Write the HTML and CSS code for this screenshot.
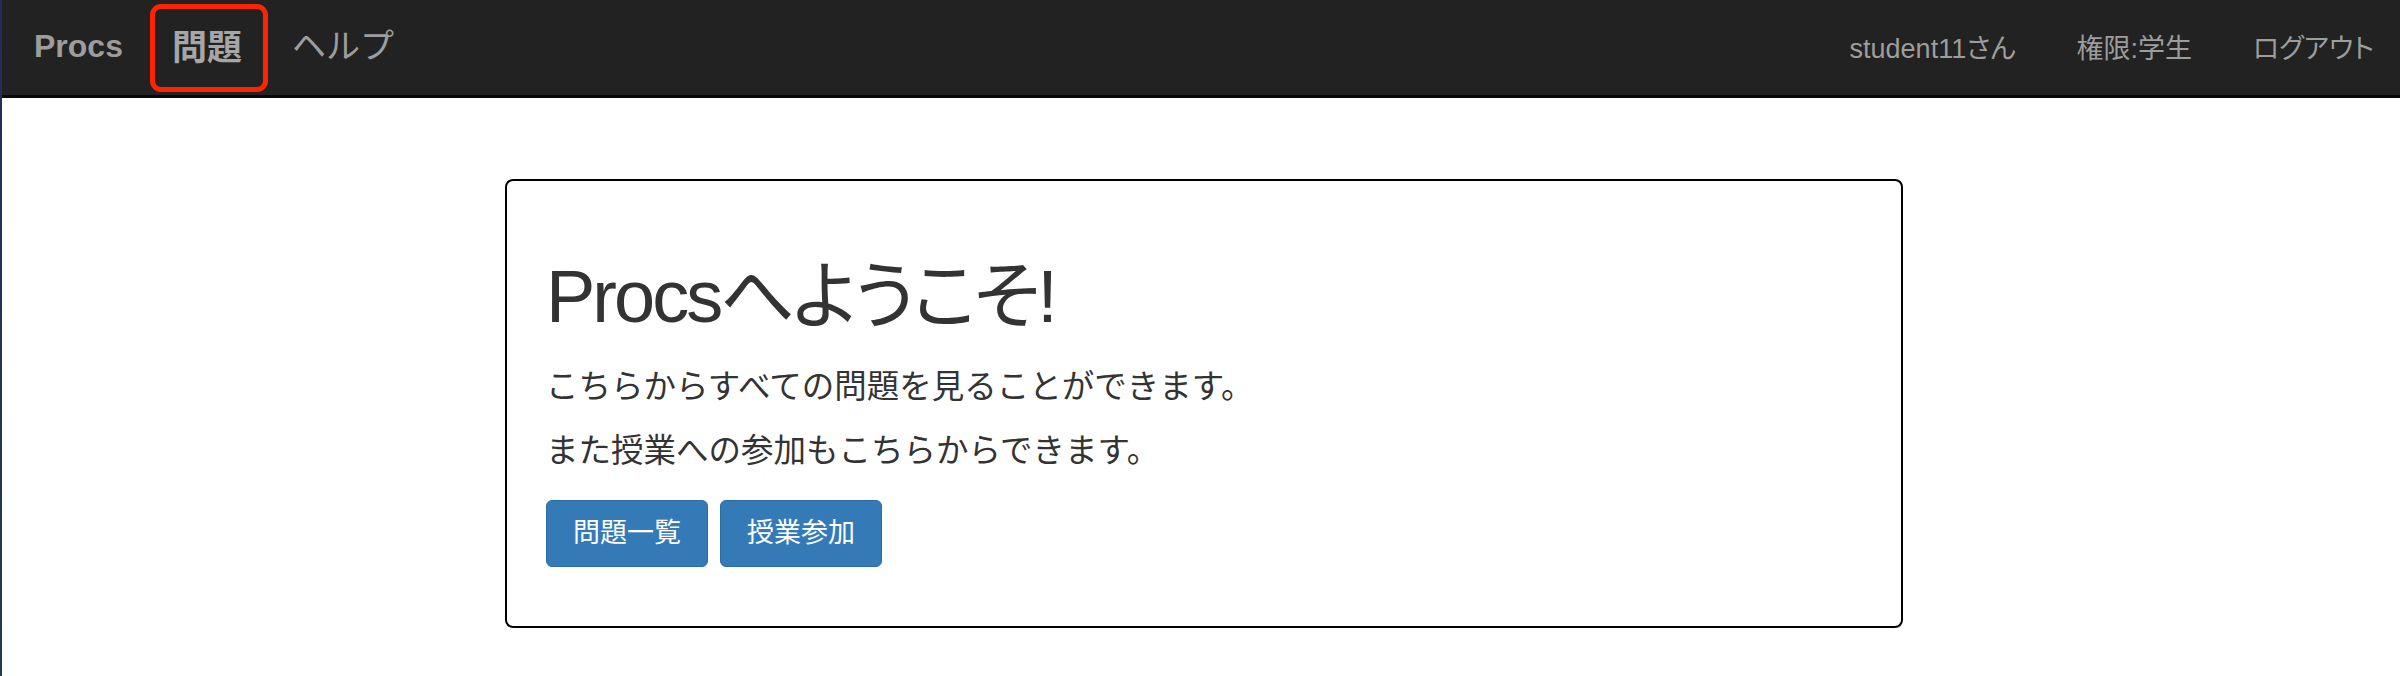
FILE: index.html
```html
<!DOCTYPE html>
<html lang="ja">
<head>
<meta charset="utf-8">
<title>Procs</title>
<link rel="stylesheet" href="styles.css">
</head>
<body>
<div class="page">
  <nav class="navbar">
    <div class="nav-left">
      <a class="brand" href="#">Procs</a>
      <a class="nav-link highlighted" href="#">問題</a>
      <a class="nav-link help" href="#">ヘルプ</a>
    </div>
    <div class="nav-right">
      <span class="nav-item">student11さん</span>
      <span class="nav-item">権限:学生</span>
      <a class="nav-item" href="#">ログアウト</a>
    </div>
  </nav>
  <main class="main">
    <section class="card">
      <h1 class="title">Procsへようこそ!</h1>
      <p class="lead">こちらからすべての問題を見ることができます。</p>
      <p class="lead">また授業への参加もこちらからできます。</p>
      <div class="actions">
        <a class="btn" href="#">問題一覧</a>
        <a class="btn" href="#">授業参加</a>
      </div>
    </section>
  </main>
</div>
</body>
</html>
```
FILE: styles.css
```css
* { box-sizing: border-box; }

html, body {
  margin: 0;
  padding: 0;
  background: #fff;
}

body {
  font-family: "Liberation Sans", "Noto Sans CJK JP", sans-serif;
  color: #333;
}

a { text-decoration: none; color: inherit; }

.page {
  min-height: 100vh;
  border-left: 2px solid #262b5c;
  border-image: linear-gradient(#262a5f, #24394b) 1;
}

.navbar {
  display: flex;
  justify-content: space-between;
  align-items: center;
  height: 98px;
  background: #222;
  border-bottom: 3px solid #080808;
  padding: 0 26px 3px 32px;
  color: #9d9d9d;
}

.nav-left {
  display: flex;
  align-items: center;
}

.brand {
  font-size: 32px;
  font-weight: bold;
  margin-right: 27px;
}

.nav-link {
  font-size: 34px;
  line-height: 78px;
}

.highlighted {
  border: 5px solid #ff2400;
  border-radius: 11px;
  padding: 0 21px 0 17px;
  margin-top: 3px;
  font-size: 35px;
  font-weight: bold;
  color: #a6a6a6;
}

.help {
  margin-left: 24px;
}

.nav-right {
  display: flex;
  align-items: center;
  gap: 61px;
  font-size: 27px;
  font-feature-settings: "palt";
}

.main {
  padding: 81px 0 40px 6px;
}

.card {
  width: 1398px;
  margin: 0 auto;
  border: 2px solid #000;
  border-radius: 8px;
  padding: 80px 39px 59px;
}

.title {
  margin: 0 0 32px;
  font-size: 74px;
  font-weight: normal;
  line-height: 72px;
  letter-spacing: -3px;
  font-feature-settings: "palt";
  color: #333;
}

.lead {
  margin: 0 0 20px;
  font-size: 32.5px;
  line-height: 44px;
}

.actions {
  display: flex;
  gap: 12px;
  margin-top: 27px;
}

.btn {
  display: inline-block;
  background: #337ab7;
  border: 1px solid #2e6da4;
  border-radius: 6px;
  color: #fff;
  font-size: 27px;
  line-height: 39px;
  padding: 13px 26px;
}
```
